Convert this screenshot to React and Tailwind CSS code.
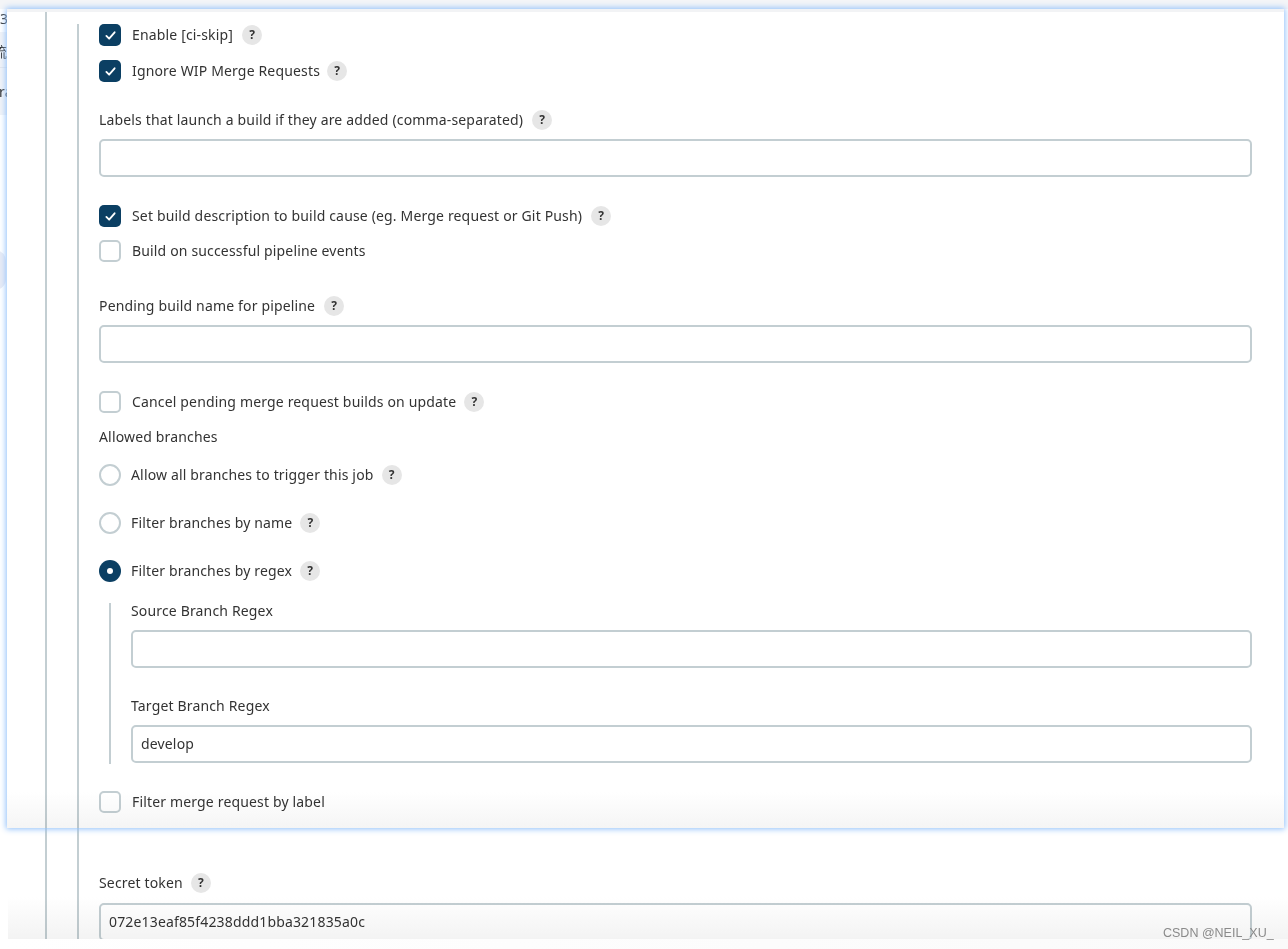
const sans = 'font-["Noto_Sans","Noto_Sans_CJK_SC",sans-serif] tracking-[0.16px]';

function Help({ gap = 'ml-[9px]' }) {
    return (
        <span className={`${gap} flex h-5 w-5 shrink-0 items-center justify-center rounded-full bg-[#e6e6e6] text-xs font-bold tracking-normal text-[#333]`}>
            ?
        </span>
    );
}

function Check({ checked, label, help, gap, className = 'h-9' }) {
    return (
        <div className={`flex items-center ${className}`}>
            {checked ? (
                <span className="flex h-[22px] w-[22px] items-center justify-center rounded-[5px] bg-[#0b3f63]">
                    <svg width="11" height="11" viewBox="0 0 12 12" fill="none" stroke="white" strokeWidth="2" strokeLinecap="round" strokeLinejoin="round">
                        <path d="M1.5 6.5 4.5 9.5 10.5 2.5" />
                    </svg>
                </span>
            ) : (
                <span className="h-[22px] w-[22px] rounded-[5px] border-2 border-[#c3ced2] bg-white" />
            )}
            <span className="ml-[11px] text-sm text-[#333]">{label}</span>
            {help && <Help gap={gap} />}
        </div>
    );
}

function Radio({ checked, label, className = '' }) {
    return (
        <div className={`flex h-9 items-center ${className}`}>
            {checked ? (
                <span className="flex h-[22px] w-[22px] items-center justify-center rounded-full bg-[#0b3f63]">
                    <span className="h-[6px] w-[6px] rounded-full bg-white" />
                </span>
            ) : (
                <span className="h-[22px] w-[22px] rounded-full border-2 border-[#c3ced2] bg-white" />
            )}
            <span className="ml-[10px] text-sm text-[#333]">{label}</span>
            <Help gap="ml-2" />
        </div>
    );
}

function Label({ children, help, gap, className = '' }) {
    return (
        <div className={`flex h-5 items-center text-sm text-[#333] ${className}`}>
            {children}
            {help && <Help gap={gap} />}
        </div>
    );
}

function Input({ value = '', className = '' }) {
    return (
        <div className={`flex h-[38px] items-center rounded-[5px] border-2 border-[#c3ced2] bg-white px-2 text-sm text-[#333] ${className}`}>
            {value}
        </div>
    );
}

export default function App() {
    return (
        <div className={`relative h-[949px] w-[1288px] overflow-hidden bg-white ${sans}`}>
            {/* top of the page behind the window */}
            <div className="h-[9px] bg-[#f4f5f7]" />

            <div className="flex">
                {/* sliver of page on the left */}
                <div className="relative h-[819px] w-[7px] overflow-hidden bg-white text-sm text-[#333]">
                    <div className="h-[23px] pt-[1px] leading-[17px]">3</div>
                    <div className="h-[36px] overflow-hidden border-b border-[#e4e6ec] bg-[#f1f3f7] pt-[12px] text-right leading-4">
                        <span className="-ml-[7px]">流</span>
                    </div>
                    <div className="h-[47px] overflow-hidden bg-[#f1f3f7] pt-[16px] leading-4">
                        <span className="-ml-[1px]">ra</span>
                    </div>
                    <div className="absolute left-[-16px] top-[241px] h-[40px] w-[22px] rounded-full bg-[#e8ebf5]" />
                </div>

                {/* the window laid over the page */}
                <div className="relative z-10 h-[819px] w-[1277px] overflow-hidden bg-white shadow-[0_0_6px_1px_#8fbffa]">
                    <div className="h-[3px] bg-[#f2f3f5]" />
                    <div className="ml-[38px] h-[816px] border-l-2 border-[#c3ced2] pl-[30px] pt-3">
                        <div className="flow-root h-[804px] border-l-2 border-[#c3ced2] pl-5 pr-8">
                            <div className="-mt-[7px]">
                                <Check checked label="Enable [ci-skip]" help />
                                <Check checked label="Ignore WIP Merge Requests" help gap="ml-[7px]" />
                                <Label help className="mt-[21px]">Labels that launch a build if they are added (comma-separated)</Label>
                                <Input className="mt-[9px]" />
                                <Check checked label="Set build description to build cause (eg. Merge request or Git Push)" help className="mt-[21px] h-9" />
                                <Check label="Build on successful pipeline events" className="-mt-px h-9" />
                                <Label help className="mt-[27px]">Pending build name for pipeline</Label>
                                <Input className="mt-[9px]" />
                                <Check label="Cancel pending merge request builds on update" help gap="ml-2" className="mt-[21px] h-9" />
                                <Label className="mt-[7px]">Allowed branches</Label>
                                <Radio label="Allow all branches to trigger this job" className="mt-[10px]" />
                                <Radio label="Filter branches by name" className="mt-3" />
                                <Radio checked label="Filter branches by regex" className="mt-3" />
                                <div className="ml-[10px] mt-[14px] flow-root h-[161px] border-l-2 border-[#c3ced2] pl-5">
                                    <Label className="-mt-[2px]">Source Branch Regex</Label>
                                    <Input className="mt-[9px]" />
                                    <Label className="mt-[28px]">Target Branch Regex</Label>
                                    <Input value="develop" className="mt-[9px]" />
                                </div>
                                <Check label="Filter merge request by label" className="mt-5 h-9" />
                            </div>
                        </div>
                    </div>
                    {/* the window fades a little at its foot */}
                    <div className="pointer-events-none absolute bottom-0 left-0 h-[36px] w-full bg-gradient-to-b from-white to-[#f5f5f5] mix-blend-multiply" />
                </div>

                {/* sliver of page on the right */}
                <div className="h-[819px] w-[4px] overflow-hidden bg-white" />
            </div>

            {/* rest of the form below the window */}
            <div className="ml-[45px] h-[111px] border-l-2 border-[#c3ced2] pl-[30px]">
                <div className="h-[111px] border-l-2 border-[#c3ced2] pl-5 pr-9 pt-[45px]">
                    <Label help gap="ml-2">Secret token</Label>
                    <Input value="072e13eaf85f4238ddd1bba321835a0c" className="mt-[10px]" />
                </div>
            </div>

            {/* soft shadow along the bottom of the page */}
            <div className="pointer-events-none absolute bottom-[10px] left-[8px] h-[42px] w-[1280px] bg-gradient-to-b from-white to-[#f3f3f3] mix-blend-multiply" />
            <div className="absolute bottom-0 left-0 h-[10px] w-full bg-gradient-to-r from-white to-[#fafafa]" />

            {/* watermark */}
            <div className='absolute left-[1163px] top-[925px] z-20 font-["Liberation_Sans",sans-serif] text-[12.5px] leading-4 tracking-normal text-[#8a8a8a]'>
                CSDN @NEIL_XU_
            </div>
        </div>
    );
}
